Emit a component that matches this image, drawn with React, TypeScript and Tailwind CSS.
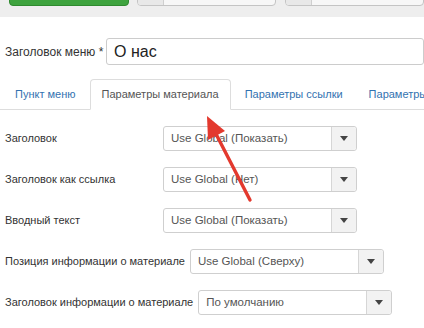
import React from "react";

const Caret = () => (
  <svg width="8" height="5" viewBox="0 0 8 5">
    <path d="M0 0 L8 0 L4 5 Z" fill="#444" />
  </svg>
);

function Select({ value, width }: { value: string; width: string }) {
  return (
    <div className={`flex h-[25px] ${width} rounded-[3px] border border-[#cfcfcf] bg-white`}>
      <div className="flex flex-1 items-center pl-[7px] text-[11.5px] text-[#555]">{value}</div>
      <div className="flex w-[25px] items-center justify-center border-l border-[#d6d6d6] bg-[#f2f2f2] rounded-r-[3px]">
        <Caret />
      </div>
    </div>
  );
}

function Row({ label, value, width = "w-[194px]" }: { label: string; value: string; width?: string }) {
  return (
    <div className="flex items-center">
      <div className="min-w-[158px] pr-[5px] text-[11px] text-[#333] whitespace-nowrap">{label}</div>
      <Select value={value} width={width} />
    </div>
  );
}

export default function App() {
  return (
    <div
      className="relative h-[328px] w-[424px] overflow-hidden bg-white"
      style={{ fontFamily: '"Liberation Sans", Arial, sans-serif' }}
    >
      {/* toolbar */}
      <div className="flex h-[17px] items-start bg-[#eeeeee] pl-[9px]">
        <div className="-mt-[22px] h-[28px] w-[130px] rounded-[4px] border border-[#2f8a2f] bg-[#3ea33e]" />
        <div className="-mt-[22px] ml-[8px] flex h-[28px] w-[150px] overflow-hidden rounded-[4px] border border-[#c4c4c4] bg-[#f7f7f7]">
          <div className="w-[26px] border-r border-[#cfcfcf] bg-[#e8e8e8]" />
        </div>
        <div className="-mt-[22px] ml-[9px] flex h-[28px] w-[150px] overflow-hidden rounded-[4px] border border-[#c4c4c4] bg-[#f7f7f7]">
          <div className="w-[26px] border-r border-[#cfcfcf] bg-[#e8e8e8]" />
        </div>
      </div>

      {/* title */}
      <div className="mt-[21px] flex items-center pl-[5px]">
        <div className="w-[105px] text-[12px] text-[#333]">Заголовок меню *</div>
        <div className="flex h-[27px] w-[330px] items-center rounded-[3px] border border-[#cccccc] pl-[7px] text-[16px] text-[#222]">
          О нас
        </div>
      </div>

      {/* tabs */}
      <div className="mt-[14px] flex h-[31px] items-end border-b border-[#dddddd] pl-[3px] whitespace-nowrap">
        <div className="mr-[2px] flex h-[30px] items-center px-[12px] text-[11px] text-[#3372b0]">Пункт меню</div>
        <div className="relative -mb-px mr-[2px] flex h-[31px] items-center rounded-t-[4px] border border-b-white border-[#dddddd] bg-white px-[11px] text-[11px] text-[#555]">
          Параметры материала
        </div>
        <div className="mr-[2px] flex h-[30px] items-center px-[12px] text-[11px] text-[#3372b0]">Параметры ссылки</div>
        <div className="flex h-[30px] items-center px-[12px] text-[11px] text-[#3372b0]">Параметры</div>
      </div>

      {/* form rows */}
      <div className="mt-[16px] flex flex-col gap-[16px] pl-[5px]">
        <Row label="Заголовок" value="Use Global (Показать)" />
        <Row label="Заголовок как ссылка" value="Use Global (Нет)" />
        <Row label="Вводный текст" value="Use Global (Показать)" />
        <Row label="Позиция информации о материале" value="Use Global (Сверху)" />
        <Row label="Заголовок информации о материале" value="По умолчанию" />
      </div>

      {/* red arrow */}
      <svg className="pointer-events-none absolute left-0 top-0" width="424" height="328">
        <line x1="250" y1="200" x2="215" y2="132" stroke="#e3392e" strokeWidth="3.4" strokeLinecap="round" />
        <polygon points="207,116 225,131 208,140" fill="#e3392e" />
      </svg>
    </div>
  );
}
